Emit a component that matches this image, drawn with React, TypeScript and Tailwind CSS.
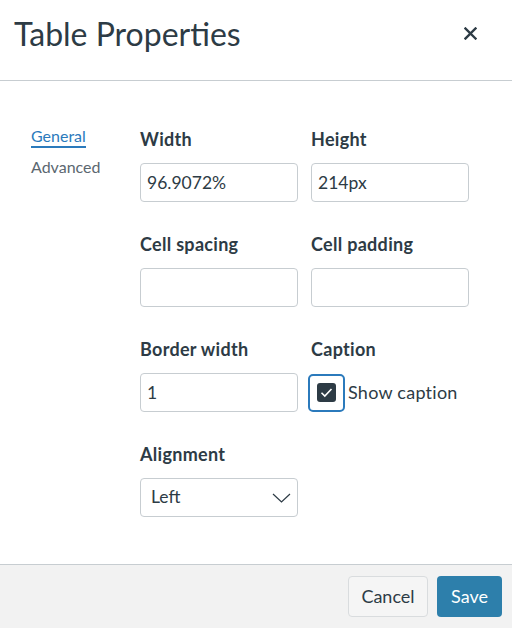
import * as React from "react";

const fieldClass =
  "h-[39px] w-full rounded-[4px] border border-[#c7cdd1] bg-white px-[6px] text-[17.5px] text-[#2d3b45] outline-none";

function Field({ label, value }: { label: string; value?: string }) {
  return (
    <div className="flex flex-col">
      <label className="mb-3 h-6 text-[18px] font-bold leading-6 tracking-[0.3px] text-[#2d3b45]">{label}</label>
      <input className={fieldClass} defaultValue={value} />
    </div>
  );
}

export default function App() {
  const [showCaption, setShowCaption] = React.useState(true);

  return (
    <div className="flex h-[628px] w-[512px] flex-col bg-white font-['Lato',sans-serif] text-[#2d3b45]">
      <div className="flex h-[81px] shrink-0 items-center justify-between border-b border-[#c7cdd1] pl-[14px] pr-[35px]">
        <h1 className="pb-[13px] text-[32px] leading-none">Table Properties</h1>
        <button className="pb-[13px]" aria-label="Close">
          <svg width="13" height="13" viewBox="0 0 13 13" fill="none">
            <path d="M1.5 1.5l10 10M11.5 1.5l-10 10" stroke="#2d3b45" strokeWidth="2.4" strokeLinecap="square" />
          </svg>
        </button>
      </div>

      <div className="flex pt-[46px]">
        <nav className="flex w-[140px] shrink-0 flex-col pl-[31px] text-[16px]">
          <span className="w-fit border-b-2 border-[#2b7abc] pb-[1px] leading-[18px] text-[#2b7abc]">General</span>
          <span className="mt-[10px] leading-[18px] text-[#5b6770]">Advanced</span>
        </nav>

        <div className="grid w-[329px] grid-cols-2 gap-x-[13px] gap-y-[30px]">
          <Field label="Width" value="96.9072%" />
          <Field label="Height" value="214px" />
          <Field label="Cell spacing" />
          <Field label="Cell padding" />
          <Field label="Border width" value="1" />
          <div className="flex flex-col">
            <label className="mb-3 h-6 text-[18px] font-bold leading-6 tracking-[0.3px]">Caption</label>
            <div className="flex h-[39px] items-center">
              <button
                onClick={() => setShowCaption(!showCaption)}
                className="-ml-[3px] flex h-[38px] w-[37px] items-center justify-center rounded-[5px] border-2 border-[#2b7abc]"
              >
                <span className="flex h-[19px] w-[19px] items-center justify-center rounded-[3px] bg-[#2d3b45]">
                  {showCaption && (
                    <svg width="13" height="11" viewBox="0 0 13 11" fill="none">
                      <path d="M1.5 5.8l3.3 3.2L11.5 2" stroke="white" strokeWidth="1.6" />
                    </svg>
                  )}
                </span>
              </button>
              <span className="ml-[3px] text-[18px] tracking-[0.25px]">Show caption</span>
            </div>
          </div>
          <div className="flex flex-col">
            <label className="mb-3 h-6 text-[18px] font-bold leading-6 tracking-[0.3px]">Alignment</label>
            <div className="flex h-[39px] items-center justify-between rounded-[4px] border border-[#c7cdd1] bg-white pl-[10px] pr-[6px] text-[17.5px]">
              <span>Left</span>
              <svg width="19" height="10" viewBox="0 0 19 10" fill="none">
                <path d="M1 1l8.5 8L18 1" stroke="#2d3b45" strokeWidth="1.2" />
              </svg>
            </div>
          </div>
        </div>
      </div>

      <div className="mt-auto flex h-[64px] shrink-0 items-center justify-end gap-[9px] border-t border-[#c7cdd1] bg-[#f2f2f2] pr-[10px]">
        <button className="h-[41px] w-[80px] rounded-[4px] border border-[#d9dcde] bg-[#f5f5f5] text-[18px] text-[#2d3b45]">
          Cancel
        </button>
        <button className="h-[41px] w-[65px] rounded-[4px] bg-[#2d7fab] text-[18px] text-white">Save</button>
      </div>
    </div>
  );
}
